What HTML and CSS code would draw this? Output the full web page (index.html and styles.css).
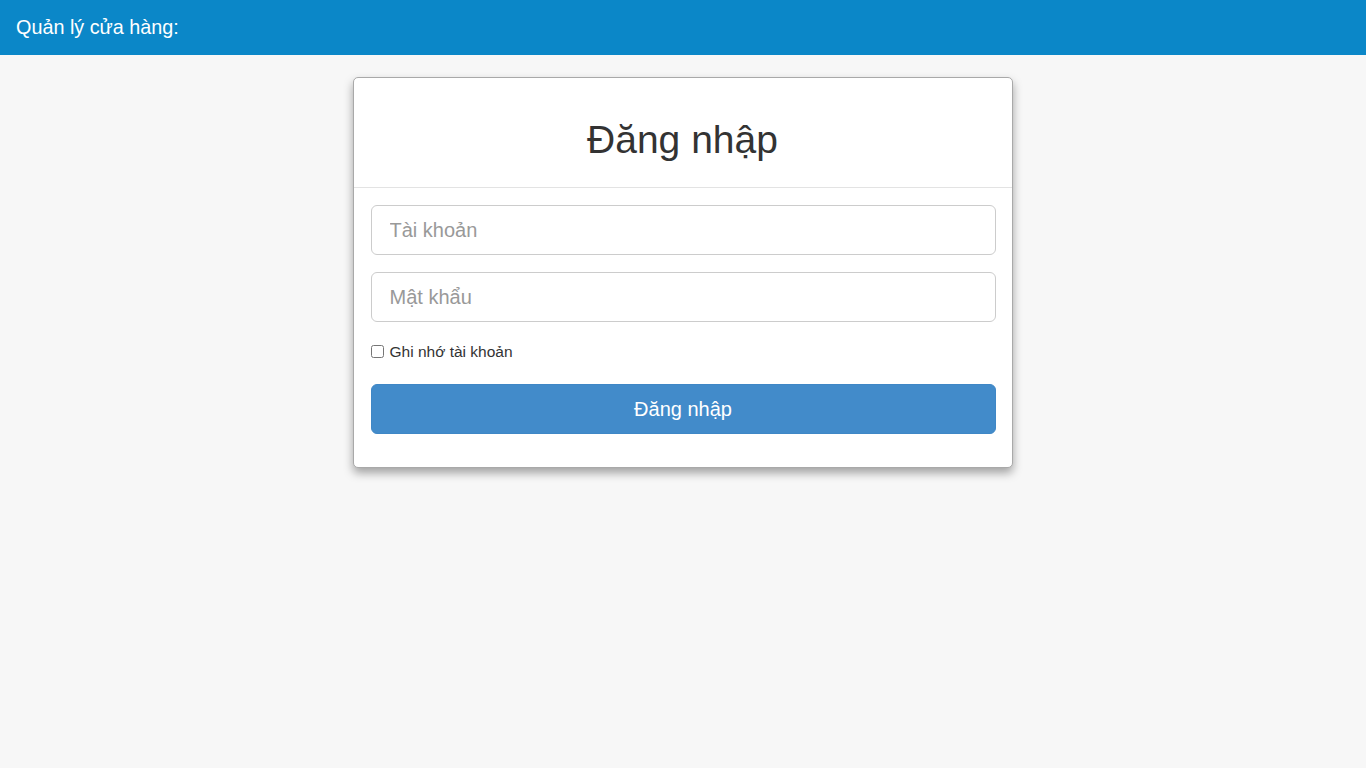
FILE: index.html
```html
<!DOCTYPE html>
<html lang="vi">
<head>
<meta charset="utf-8">
<title>Đăng nhập</title>
<link rel="stylesheet" href="styles.css">
</head>
<body>
<header class="navbar">
  <span class="brand">Quản lý cửa hàng:</span>
</header>
<main class="page">
  <section class="card">
    <div class="card-head">
      <h1 class="title">Đăng nhập</h1>
    </div>
    <form class="card-body">
      <input class="field" type="text" placeholder="Tài khoản">
      <input class="field" type="password" placeholder="Mật khẩu">
      <label class="remember"><input type="checkbox" class="check"> Ghi nhớ tài khoản</label>
      <button type="button" class="btn">Đăng nhập</button>
    </form>
  </section>
</main>
</body>
</html>
```
FILE: styles.css
```css
* { box-sizing: border-box; }
html, body { margin: 0; padding: 0; }
body {
  background: #f7f7f7;
  font-family: "Liberation Sans", Arial, sans-serif;
  color: #333;
  min-height: 768px;
}
.navbar {
  height: 55px;
  background: #0b87c8;
  display: flex;
  align-items: center;
  padding: 0 16px;
}
.brand {
  color: #fff;
  font-size: 19.8px;
  margin-top: -1px;
}
.page {
  display: flex;
  justify-content: center;
  padding-top: 22px;
}
.card {
  width: 660px;
  margin-left: -1px;
  background: #fff;
  border: 1px solid #a9a9a9;
  border-radius: 5px;
  box-shadow: 0 5px 10px rgba(0,0,0,0.35);
}
.card-head {
  height: 110px;
  border-bottom: 1px solid #e3e3e3;
  display: flex;
  align-items: center;
  justify-content: center;
}
.title {
  margin: 0;
  font-weight: normal;
  font-size: 39px;
  color: #333;
  padding-top: 14px;
}
.card-body {
  padding: 17px 16px 33px 17px;
  display: flex;
  flex-direction: column;
}
.field {
  height: 50px;
  border: 1px solid #ccc;
  border-radius: 6px;
  padding: 0 18px;
  font-family: "Liberation Sans", Arial, sans-serif;
  font-size: 20px;
  color: #555;
  margin-bottom: 17px;
  outline: none;
}
.field::placeholder { color: #999; }
.remember {
  display: flex;
  align-items: center;
  font-size: 15.5px;
  color: #333;
  margin: 3px 0 22px 0;
  height: 20px;
}
.check {
  margin: 0 6px 2px 0;
  width: 13px;
  height: 13px;
}
.btn {
  height: 50px;
  background: #428bca;
  border: 1px solid #3f87c6;
  border-radius: 6px;
  color: #fff;
  font-family: "Liberation Sans", Arial, sans-serif;
  font-size: 20px;
}
```
